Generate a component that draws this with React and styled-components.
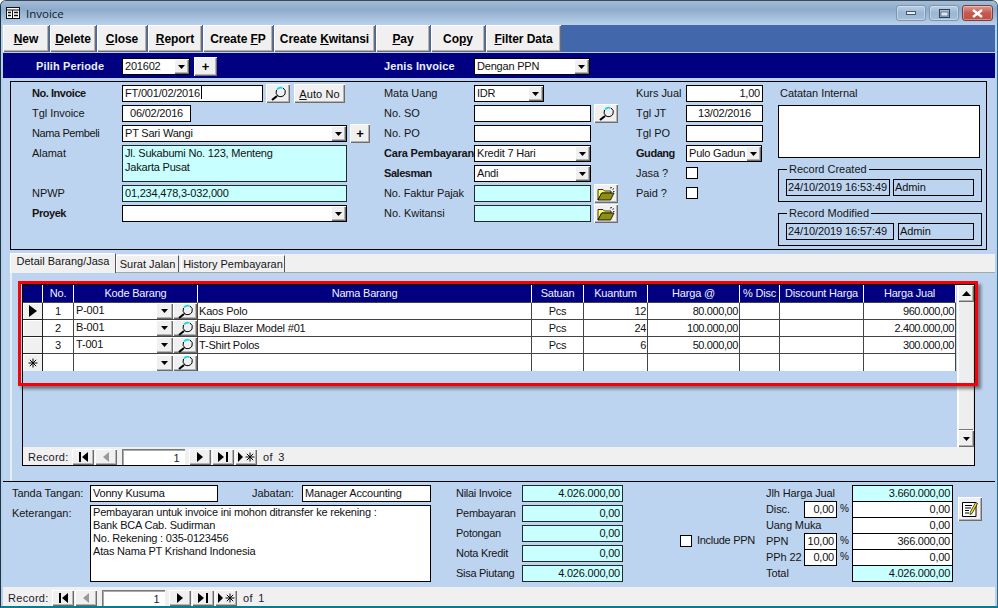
import React from "react";
import styled, { createGlobalStyle } from "styled-components";

const Global = createGlobalStyle`
  html, body { margin: 0; padding: 0; background: #fff; }
  body { font-family: "Liberation Sans", Arial, sans-serif; font-size: 11px; color: #111; }
  #root { width: 998px; height: 608px; overflow: hidden; }
  * { box-sizing: border-box; }
`;

const bevel = `box-shadow: inset 1px 1px 0 #fff, inset -1px -1px 0 #6d6d6d, inset -2px -2px 0 #b4b4b4;`;

const Window = styled.div`
  width: 998px; height: 608px; display: flex; flex-direction: column;
  border-radius: 6px 6px 0 0; overflow: hidden;
  border: 1px solid #1d3447; border-top-color: #3a4a58; border-bottom: 2px solid #007f92; border-right-color: #2a6a8a;
  background: #b8d0ea;
`;
const TitleBar = styled.div`
  height: 24px; flex: none; display: flex; align-items: center; padding: 0 4px 0 5px;
  background: linear-gradient(#a4bcd7, #8eabcb 35%, #b9d1ea);
`;
const TitleText = styled.span`
  font-family: "Open Sans", "Noto Sans", sans-serif; font-size: 11.5px; color: #10202c; margin-left: 6px; flex: 1;
`;
const WinButton = styled.div`
  width: ${p => p.$w || 30}px; height: 16px; margin-left: 3px; border-radius: 3px; display: flex; align-items: center; justify-content: center;
  border: 1px solid ${p => p.$close ? "#7e3a42" : "#7f95ad"};
  background: ${p => p.$close ? "linear-gradient(#dc9c92, #c6584c 50%, #bf5048)" : "linear-gradient(#bcd0e6, #9ab6d3 50%, #a5bfda)"};
  box-shadow: inset 0 0 0 1px rgba(255,255,255,.35);
`;
const Body = styled.div`
  flex: 1; min-height: 0; margin: 0 2px; display: flex; flex-direction: column;
`;
const Toolbar = styled.div`
  height: 27px; flex: none; display: flex; gap: 1px; background: #4267aa;
`;
const ToolButton = styled.div`
  width: ${p => p.$w}px; height: 27px; background: #f0f0f0; ${bevel}
  display: flex; align-items: center; justify-content: center;
  font-weight: bold; font-size: 12px; letter-spacing: -.05px; color: #000;
`;
const Band = styled.div`
  height: 25px; margin-top: 1px; flex: none; background: #000080; display: flex; align-items: flex-start; padding: 5px 0 0 33px;
`;
const BandLabel = styled.div`
  width: ${p => p.$w}px; margin-left: ${p => p.$ml || 0}px; color: #e9f0ff; font-weight: bold; font-size: 11px; letter-spacing: .12px; line-height: 16px;
`;
const Content = styled.div`
  flex: 1; min-height: 0; background: #bdd4f0; display: flex; flex-direction: column;
`;
const Frame = styled.div`
  height: 169px; margin: 3px 8px 0 7px; flex: none; border: 1px solid #000; padding: 3px 0 0 21px; display: flex;
`;
const Col = styled.div`
  width: ${p => p.$w}px; margin-right: ${p => p.$mr || 0}px; flex: none; display: flex; flex-direction: column; gap: 3px;
`;
const Row = styled.div`
  display: flex; align-items: flex-start; min-height: 17px;
`;
const Label = styled.div`
  width: ${p => p.$w || 90}px; flex: none; line-height: 16px; font-size: 11px; color: #151515;
  letter-spacing: ${p => p.$ls ?? (p.$b ? -0.45 : -0.05)}px;
  font-weight: ${p => p.$b ? "bold" : "normal"}; margin-top: ${p => p.$mt || 0}px; margin-left: ${p => p.$ml || 0}px;
  white-space: nowrap;
`;
const Field = styled.div`
  position: relative; width: ${p => p.$w}px; height: ${p => p.$h || 17}px; flex: none; white-space: pre;
  border: 1px solid ${p => p.$cy ? "#202a2a" : "#000"}; background: ${p => p.$cy ? "#c8ffff" : p.$clear ? "transparent" : "#fff"};
  padding: 0 ${p => p.$clear ? 1 : 2}px; font-size: 11px; letter-spacing: ${p => p.$clear ? -0.1 : -0.2}px; line-height: ${p => p.$lh || 15}px; color: #111; overflow: hidden;
  text-align: ${p => p.$a || "left"};
`;
const Caret = styled.span`
  display: inline-block; width: 1px; height: 13px; background: #000; vertical-align: -2px; margin-left: 1px;
`;
const ArrowBox = styled.div`
  position: absolute; top: 0; right: 0; bottom: 0; width: 15px; background: #f0f0f0; ${bevel}
  display: flex; align-items: center; justify-content: center;
`;
const Btn = styled.div`
  width: ${p => p.$w || 24}px; height: 19px; margin: -1px 0 -1px ${p => p.$ml || 3}px; flex: none; background: #f0f0f0; ${bevel}
  display: flex; align-items: center; justify-content: center; font-size: 11px; letter-spacing: .1px; color: #111;
`;
const Plus = styled.span`font-weight: bold; font-size: 13px; line-height: 13px; color: #000;`;
const Check = styled.div`
  width: 12px; height: 12px; flex: none; background: #fff; border: 1px solid #000; margin-top: ${p => p.$mt ?? 2}px;
`;
const NoteLabel = styled(Label)`padding-left: 2px;`;
const Group = styled.div`
  position: relative; height: 33px; margin-top: 8px; border: 1px solid #000; display: flex; gap: ${p => p.$g}px; padding: 9px 0 0 7px;
`;
const Legend = styled.div`
  position: absolute; top: -8px; left: 8px; background: #bdd4f0; padding: 0 2px; font-size: 11px; line-height: 15px; color: #151515;
`;
const Tabs = styled.div`
  height: 19px; margin: 4px 0 0 7px; flex: none; display: flex; align-items: flex-end; background: #f0f0f0;
  border-bottom: 1px solid #a8a8a8;
`;
const Tab = styled.div`
  height: ${p => p.$on ? 20 : 17}px; width: ${p => p.$w}px; margin-right: ${p => p.$mr || 0}px; background: #f0f0f0;
  margin-bottom: ${p => p.$on ? -1 : 0}px; padding-top: ${p => p.$on ? 0 : 1}px; text-align: center; font-size: 11px; letter-spacing: 0; line-height: 15px; color: #151515; white-space: nowrap;
  border-left: 1px solid #fff; border-top: 1px solid #fff; border-right: 1px solid #555;
`;
const Panel = styled.div`
  height: 208px; margin-left: 7px; flex: none; border-left: 2px solid #e6eef8; padding: 11px 0 0 10px;
`;
const Sub = styled.div`
  position: relative; width: 953px; height: 182px; border: 1px solid #000; display: flex; flex-direction: column;
`;
const SubTop = styled.div`
  flex: 1; min-height: 0; display: flex; justify-content: space-between;
`;
const Scroll = styled.div`
  width: 17px; display: flex; flex-direction: column; background: #eeeeee; border-left: 1px solid #fff;
`;
const ScrollBtn = styled.div`
  height: 17px; flex: none; background: #f0f0f0; ${bevel} display: flex; align-items: center; justify-content: center;
`;
const ScrollTrack = styled.div`
  flex: 1; box-shadow: inset 1px 0 0 #fff, inset -1px 0 0 #ddd, inset 0 -1px 0 #777;
`;
const Grid = styled.table`
  width: 933px; table-layout: fixed; border-collapse: separate; border-spacing: 0; align-self: flex-start;
`;
const Th = styled.th`
  height: 18px; padding: 0 0 2px; background: #000080; color: #eef3ff; font-weight: normal; font-size: 11px; letter-spacing: -.2px;
  border-right: 1px solid #fff; border-bottom: 1px solid #444; white-space: nowrap; overflow: hidden;
`;
const Td = styled.td`
  height: 17px; padding: 0 1px; background: #fff; font-size: 11px; letter-spacing: ${p => p.$a === "right" ? -0.4 : -0.2}px; color: #111; line-height: 15px;
  border-right: 1px solid #444; border-bottom: 1px solid #444; text-align: ${p => p.$a || "left"}; white-space: nowrap; overflow: hidden;
`;
const TdLast = styled(Td)`border-bottom: none; height: 16px;`;
const Sel = styled.td`
  height: 17px; padding: 0; background: #f0f0f0; border-right: 1px solid #222; border-bottom: ${p => p.$last ? "none" : "1px solid #222"}; text-align: center; line-height: 0;
  box-shadow: inset 1px 1px 0 #fff;
`;
const KodeCell = styled.div`
  display: flex; align-items: stretch; height: 16px; margin: 0 -1px 0 0;
`;
const KodeText = styled.span`flex: 1; padding-left: 1px;`;
const MiniArrow = styled.div`
  width: 17px; background: #f0f0f0; ${bevel} display: flex; align-items: center; justify-content: center;
`;
const MiniSearch = styled.div`
  width: 24px; background: #f0f0f0; ${bevel} display: flex; align-items: center; justify-content: center;
`;
const Red = styled.div`
  position: absolute; left: -5px; top: -4px; width: 960px; height: 105px; border: 3px solid #fb0007; pointer-events: none;
  box-shadow: 3px 3px 3px rgba(40,40,40,.55);
`;
const Nav = styled.div`
  height: ${p => p.$h}px; flex: none; background: #f0f0f0; display: flex; align-items: center; padding: 2px 0 0 5px; font-size: 11px; letter-spacing: .3px; color: #1a1a2a;
`;
const NavLabel = styled.div`width: 44px;`;
const NavBtn = styled.div`
  width: 22px; height: 16px; margin-right: 1px; flex: none; background: #f0f0f0; ${bevel} display: flex; align-items: center; justify-content: center;
`;
const NavInput = styled.div`
  width: 63px; height: 16px; margin: 0 4px 0 4px; flex: none; background: #fff; text-align: right; padding: 2px 5px 0 0; line-height: 14px; font-size: 11px;
  box-shadow: inset 1px 1px 0 #777, inset 2px 2px 0 #aaa;
`;
const NavOf = styled.div`margin-left: 5px; word-spacing: 2px;`;
const Bottom = styled.div`
  flex: 1; min-height: 0; border-top: 1px solid #000; padding: 3px 0 0 9px; display: flex;
`;
const Totals = styled.div`display: flex; flex-direction: column; width: 187px; flex: none;`;
const TotalRow = styled.div`display: flex; height: 16px; align-items: stretch;`;
const TotalLabel = styled.div`
  width: ${p => p.$w}px; flex: none; line-height: 16px; letter-spacing: -.1px; font-size: 11px; color: #151515; white-space: nowrap;
`;
const PctInput = styled.div`
  width: 33px; flex: none; height: 17px; border: 1px solid #000; background: #fff; text-align: right; padding-right: 2px; line-height: 15px; letter-spacing: -.2px;
`;
const Pct = styled.div`width: 15px; flex: none; text-align: right; padding-right: 3px; font-size: 10px; line-height: 16px;`;
const TotalVal = styled.div`
  width: 101px; flex: none; height: 17px; margin-bottom: -1px; border: 1px solid #000; background: ${p => p.$cy ? "#c8ffff" : "#fff"}; text-align: right; padding-right: 2px; line-height: 15px; letter-spacing: -.25px; color: #111;
`;
const NoteBtn = styled.div`
  width: 24px; height: 24px; margin: 12px 0 0 5px; flex: none; background: #f0f0f0; ${bevel} display: flex; align-items: center; justify-content: center;
`;
const Inline = styled.div`
  display: flex; align-items: flex-start; margin-left: ${p => p.$ml || 0}px; margin-top: ${p => p.$mt || 0}px;
`;

const Down = ({ c = "#000" }) => (
  <svg width="7" height="4" viewBox="0 0 7 4"><path d="M0 0h7L3.5 4z" fill={c} /></svg>
);
const Up = () => (
  <svg width="9" height="5" viewBox="0 0 9 5"><path d="M0 5h9L4.5 0z" fill="#000" /></svg>
);
const SearchIcon = () => (
  <svg width="17" height="15" viewBox="0 0 17 15" fill="none">
    <path d="M7 10 L2 14" stroke="#000" strokeWidth="2.2" />
    <path d="M6.5 4 A5 5 0 0 0 8 10 A5 5 0 0 0 15 8" stroke="#000" />
    <path d="M7 3.5 A5 5 0 0 1 12.5 2" stroke="#12d8e8" strokeWidth="1.8" />
    <path d="M13 2 A5 5 0 0 1 15 8" stroke="#000" />
  </svg>
);
const FolderIcon = () => (
  <svg width="18" height="14" viewBox="0 0 18 14">
    <path d="M1 13V2.5h5l1.5 1.5H14V6H5L1 13z" fill="#ffff66" stroke="#000" strokeWidth=".8" />
    <path d="M1 13L4.5 6H17l-3.5 7z" fill="#8f8f10" stroke="#000" strokeWidth=".8" />
    <path d="M13 1l2-.5M15.5 2.5l1.5-1M16 4.5h1.5" stroke="#000" strokeWidth=".8" />
  </svg>
);
const NoteIcon = () => (
  <svg width="18" height="17" viewBox="0 0 18 17" fill="none">
    <path d="M1.5 1.5H15V15.5H1.5z" fill="#fff" stroke="#000" />
    <path d="M4 4.5h7M4 7h6M4 9.5h4M4 12h4" stroke="#000" />
    <path d="M14.5 1.5l2 1L11 12.5l-2 1 .2-2.2z" fill="#f6e61c" stroke="#000" strokeWidth=".7" />
  </svg>
);
const Star = ({ x = 0 }) => (
  <g transform={`translate(${x},0)`} stroke="#000" strokeWidth="1">
    <path d="M5 0.5v9M0.5 5h9M1.8 1.8l6.4 6.4M8.2 1.8l-6.4 6.4" />
  </g>
);
const NavIcon = ({ k }) => {
  if (k === "first") return <svg width="11" height="10" viewBox="0 0 11 10"><path d="M1 0h2v10H1zM10 0v10L4 5z" /></svg>;
  if (k === "prev") return <svg width="7" height="10" viewBox="0 0 7 10"><path d="M6 0v10L0 5z" fill="#9a9a9a" /></svg>;
  if (k === "next") return <svg width="7" height="10" viewBox="0 0 7 10"><path d="M0 0v10l6-5z" /></svg>;
  if (k === "last") return <svg width="11" height="10" viewBox="0 0 11 10"><path d="M0 0v10l6-5zM8 0h2v10H8z" /></svg>;
  return <svg width="17" height="10" viewBox="0 0 17 10"><path d="M0 0v10l5-5z" /><Star x={7} /></svg>;
};

const Combo = ({ w, children }) => (
  <Field $w={w}>{children}<ArrowBox><Down /></ArrowBox></Field>
);
const Search = () => <Btn $w={24}><SearchIcon /></Btn>;
const Folder = () => <Btn $w={24}><FolderIcon /></Btn>;

const RecordNav = ({ h, of }) => (
  <Nav $h={h}>
    <NavLabel>Record:</NavLabel>
    <NavBtn><NavIcon k="first" /></NavBtn>
    <NavBtn><NavIcon k="prev" /></NavBtn>
    <NavInput>1</NavInput>
    <NavBtn><NavIcon k="next" /></NavBtn>
    <NavBtn><NavIcon k="last" /></NavBtn>
    <NavBtn><NavIcon k="new" /></NavBtn>
    <NavOf>of {of}</NavOf>
  </Nav>
);

const tools = [
  [46, "", "N", "ew"], [46, "", "D", "elete"], [50, "", "C", "lose"], [54, "", "R", "eport"],
  [70, "Create ", "F", "P"], [101, "Create ", "K", "witansi"], [54, "", "P", "ay"], [54, "Co", "p", "y"], [75, "", "F", "ilter Data"],
];
const cols = [20, 31, 124, 334, 52, 64, 92, 40, 84, 92];
const heads = ["", "No.", "Kode Barang", "Nama Barang", "Satuan", "Kuantum", "Harga @", "% Disc", "Discount Harga", "Harga Jual"];
const rows = [
  ["1", "P-001", "Kaos Polo", "Pcs", "12", "80.000,00", "960.000,00"],
  ["2", "B-001", "Baju Blazer Model #01", "Pcs", "24", "100.000,00", "2.400.000,00"],
  ["3", "T-001", "T-Shirt Polos", "Pcs", "6", "50.000,00", "300.000,00"],
];

export default function App() {
  return (
    <>
      <Global />
      <Window>
        <TitleBar>
          <svg width="14" height="12" viewBox="0 0 14 12" fill="none">
            <rect x=".5" y=".5" width="13" height="11" fill="#fff" stroke="#111" />
            <path d="M.5 3h13" stroke="#111" />
            <path d="M2 5.5h3M2 8.5h3M8 5.5h4M8 8.5h4" stroke="#111" strokeWidth="1.4" />
            <path d="M6.5 3v8" stroke="#111" />
          </svg>
          <TitleText>Invoice</TitleText>
          <WinButton><svg width="10" height="4"><rect x=".5" y=".5" width="9" height="3" fill="#e8eef5" stroke="#44586c" /></svg></WinButton>
          <WinButton><svg width="11" height="9"><rect x=".5" y=".5" width="10" height="8" fill="none" stroke="#2e4256" /><rect x="2" y="3" width="7" height="4" fill="#dfe8f2" stroke="#2e4256" strokeWidth=".6" /></svg></WinButton>
          <WinButton $close $w={31}><svg width="13" height="9" viewBox="0 0 13 9"><path d="M2 1l9 7M11 1L2 8" stroke="#fff" strokeWidth="2.4" /></svg></WinButton>
        </TitleBar>
        <Body>
          <Toolbar>
            {tools.map(([w, a, u, b]) => (
              <ToolButton key={a + u + b} $w={w}><span>{a}<u>{u}</u>{b}</span></ToolButton>
            ))}
          </Toolbar>
          <Band>
            <BandLabel $w={86}>Pilih Periode</BandLabel>
            <Combo w={68}>201602</Combo>
            <Btn $w={23} $ml={4}><Plus>+</Plus></Btn>
            <BandLabel $w={90} $ml={167}>Jenis Invoice</BandLabel>
            <Combo w={116}>Dengan PPN</Combo>
          </Band>
          <Content>
            <Frame>
              <Col $w={338} $mr={14}>
                <Row><Label $b>No. Invoice</Label><Field $w={141}>FT/001/02/2016<Caret /></Field><Search /><Btn $w={51} $ml={4}><span><u>A</u>uto No</span></Btn></Row>
                <Row><Label>Tgl Invoice</Label><Field $w={69} $a="center">06/02/2016</Field></Row>
                <Row><Label $ls={-0.4}>Nama Pembeli</Label><Combo w={225}>PT Sari Wangi</Combo><Btn $w={20}><Plus>+</Plus></Btn></Row>
                <Row><Label>Alamat</Label><Field $w={225} $h={37} $cy $lh={14}>{"Jl. Sukabumi No. 123, Menteng\nJakarta Pusat"}</Field></Row>
                <Row><Label>NPWP</Label><Field $w={225} $cy>01,234,478,3-032,000</Field></Row>
                <Row><Label $b>Proyek</Label><Combo w={225} /></Row>
              </Col>
              <Col $w={234} $mr={18}>
                <Row><Label>Mata Uang</Label><Combo w={70}>IDR</Combo></Row>
                <Row><Label>No. SO</Label><Field $w={117} /><Search /></Row>
                <Row><Label>No. PO</Label><Field $w={117} /></Row>
                <Row><Label $b $ls={-0.2}>Cara Pembayaran</Label><Combo w={117}>Kredit 7 Hari</Combo></Row>
                <Row><Label $b>Salesman</Label><Combo w={117}>Andi</Combo></Row>
                <Row><Label $ls={-0.12}>No. Faktur Pajak</Label><Field $w={117} $cy /><Folder /></Row>
                <Row><Label>No. Kwitansi</Label><Field $w={117} $cy /><Folder /></Row>
              </Col>
              <Col $w={127} $mr={15}>
                <Row><Label $w={50}>Kurs Jual</Label><Field $w={77} $a="right">1,00</Field></Row>
                <Row><Label $w={50}>Tgl JT</Label><Field $w={77} $a="center">13/02/2016</Field></Row>
                <Row><Label $w={50}>Tgl PO</Label><Field $w={77} /></Row>
                <Row><Label $w={50} $b>Gudang</Label><Combo w={76}>Pulo Gadun</Combo></Row>
                <Row><Label $w={50}>Jasa ?</Label><Check /></Row>
                <Row><Label $w={50}>Paid ?</Label><Check /></Row>
              </Col>
              <Col $w={204}>
                <Row><NoteLabel $w={120}>Catatan Internal</NoteLabel></Row>
                <Field $w={202} $h={53} />
                <Group $g={3}>
                  <Legend>Record Created</Legend>
                  <Field $w={104} $clear>24/10/2019 16:53:49</Field>
                  <Field $w={81} $clear>Admin</Field>
                </Group>
                <Group $g={4}>
                  <Legend>Record Modified</Legend>
                  <Field $w={108} $clear>24/10/2019 16:57:49</Field>
                  <Field $w={76} $clear>Admin</Field>
                </Group>
              </Col>
            </Frame>
            <Tabs>
              <Tab $on $w={106}>Detail Barang/Jasa</Tab>
              <Tab $w={63} $mr={2}>Surat Jalan</Tab>
              <Tab $w={104}>History Pembayaran</Tab>
            </Tabs>
            <Panel>
              <Sub>
                <SubTop>
                  <Grid>
                    <colgroup>{cols.map((w, i) => <col key={i} width={w} />)}</colgroup>
                    <thead><tr>{heads.map((h, i) => <Th key={i}>{h}</Th>)}</tr></thead>
                    <tbody>
                      {rows.map((r, i) => (
                        <tr key={r[0]}>
                          <Sel>{i === 0 && <svg width="8" height="12" viewBox="0 0 8 12"><path d="M0 0v12l8-6z" /></svg>}</Sel>
                          <Td $a="center">{r[0]}</Td>
                          <Td><KodeCell><KodeText>{r[1]}</KodeText><MiniArrow><Down /></MiniArrow><MiniSearch><SearchIcon /></MiniSearch></KodeCell></Td>
                          <Td>{r[2]}</Td>
                          <Td $a="center">{r[3]}</Td>
                          <Td $a="right">{r[4]}</Td>
                          <Td $a="right">{r[5]}</Td>
                          <Td />
                          <Td />
                          <Td $a="right">{r[6]}</Td>
                        </tr>
                      ))}
                      <tr>
                        <Sel $last><svg width="10" height="10" viewBox="0 0 10 10"><Star /></svg></Sel>
                        <TdLast />
                        <TdLast><KodeCell><KodeText /><MiniArrow><Down /></MiniArrow><MiniSearch><SearchIcon /></MiniSearch></KodeCell></TdLast>
                        <TdLast /><TdLast /><TdLast /><TdLast /><TdLast /><TdLast /><TdLast />
                      </tr>
                    </tbody>
                  </Grid>
                  <Scroll>
                    <ScrollBtn><Up /></ScrollBtn>
                    <ScrollTrack />
                    <ScrollBtn><Down /></ScrollBtn>
                  </Scroll>
                </SubTop>
                <RecordNav h={18} of={3} />
                <Red />
              </Sub>
            </Panel>
            <Bottom>
              <Col $w={419} $mr={25}>
                <Row>
                  <Label $w={78}>Tanda Tangan:</Label><Field $w={128}>Vonny Kusuma</Field>
                  <Label $w={50} $ml={34}>Jabatan:</Label><Field $w={129}>Manager Accounting</Field>
                </Row>
                <Row>
                  <Label $w={78}>Keterangan:</Label>
                  <Field $w={341} $h={77} $lh={13}>{"Pembayaran untuk invoice ini mohon ditransfer ke rekening :\nBank BCA Cab. Sudirman\nNo. Rekening : 035-0123456\nAtas Nama PT Krishand Indonesia"}</Field>
                </Row>
              </Col>
              <Col $w={167}>
                {[["Nilai Invoice", "4.026.000,00"], ["Pembayaran", "0,00"], ["Potongan", "0,00"], ["Nota Kredit", "0,00"], ["Sisa Piutang", "4.026.000,00"]].map(([l, v]) => (
                  <Row key={l}><Label $w={66} $ls={-0.28}>{l}</Label><Field $w={101} $cy $a="right">{v}</Field></Row>
                ))}
              </Col>
              <Inline $ml={57} $mt={50}>
                <Check $mt={0} /><Label $w={69} $ml={5} $mt={-3} $ls={-0.3}>Include PPN</Label>
              </Inline>
              <Totals>
                <TotalRow><TotalLabel $w={86}>Jlh Harga Jual</TotalLabel><TotalVal $cy>3.660.000,00</TotalVal></TotalRow>
                <TotalRow><TotalLabel $w={38}>Disc.</TotalLabel><PctInput>0,00</PctInput><Pct>%</Pct><TotalVal>0,00</TotalVal></TotalRow>
                <TotalRow><TotalLabel $w={86}>Uang Muka</TotalLabel><TotalVal>0,00</TotalVal></TotalRow>
                <TotalRow><TotalLabel $w={38}>PPN</TotalLabel><PctInput>10,00</PctInput><Pct>%</Pct><TotalVal>366.000,00</TotalVal></TotalRow>
                <TotalRow><TotalLabel $w={38}>PPh 22</TotalLabel><PctInput>0,00</PctInput><Pct>%</Pct><TotalVal>0,00</TotalVal></TotalRow>
                <TotalRow><TotalLabel $w={86}>Total</TotalLabel><TotalVal $cy>4.026.000,00</TotalVal></TotalRow>
              </Totals>
              <NoteBtn><NoteIcon /></NoteBtn>
            </Bottom>
            <RecordNav h={19} of={1} />
          </Content>
        </Body>
      </Window>
    </>
  );
}
